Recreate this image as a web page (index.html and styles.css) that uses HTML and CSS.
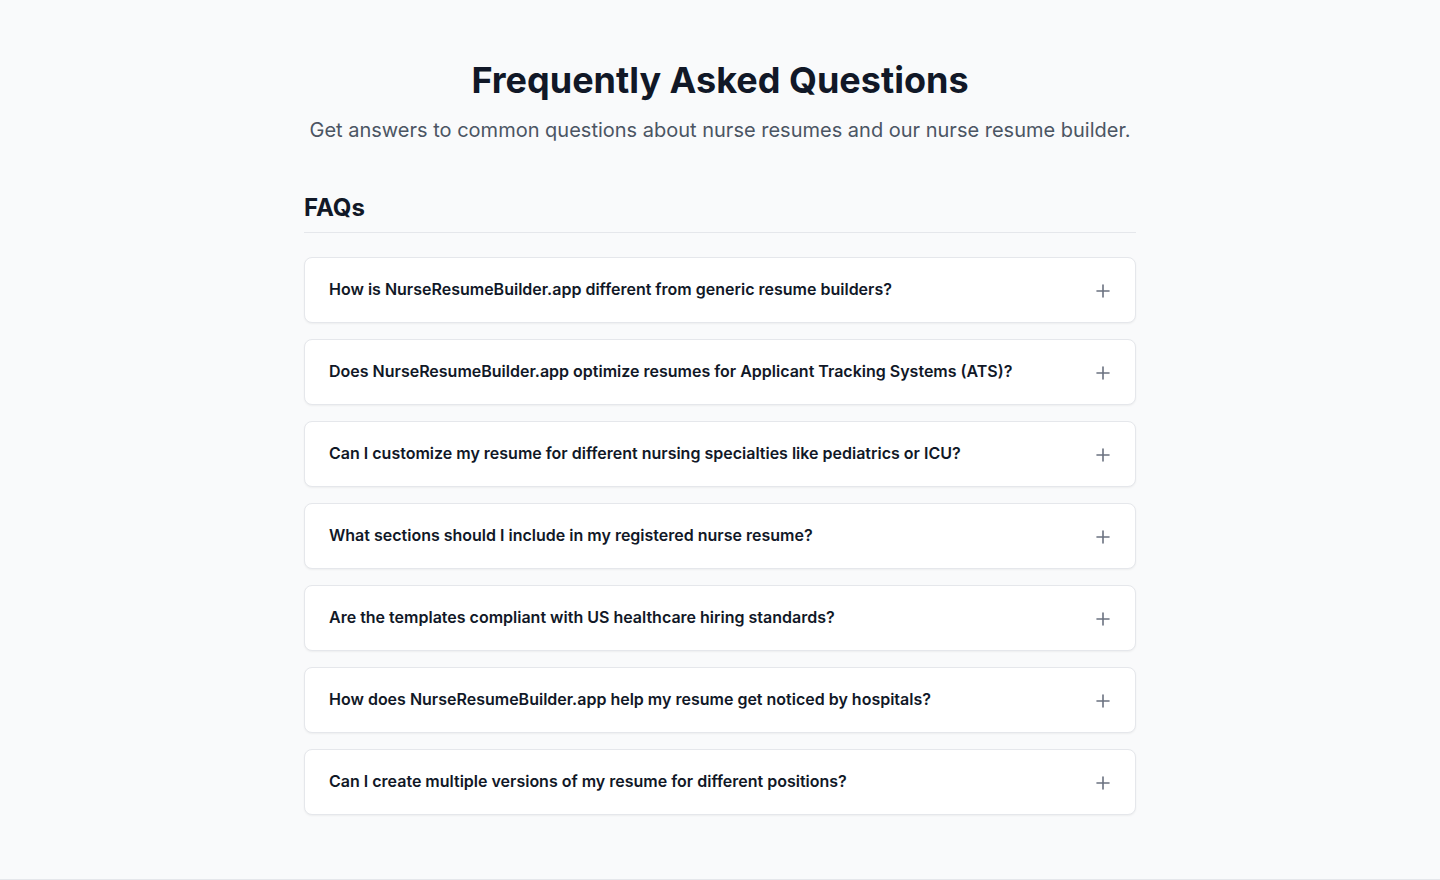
FILE: index.html
```html
<!DOCTYPE html>
<html lang="en">
<head>
    <meta charset="UTF-8">
    <meta name="viewport" content="width=device-width, initial-scale=1.0">
    <title>FAQ - NurseResumeBuilder.app</title>
    <link rel="stylesheet" href="styles.css">
</head>
<body>
    <section class="faq-section">
        <div class="faq-header">
            <h2>Frequently Asked Questions</h2>
            <p>Get answers to common questions about nurse resumes and our nurse resume builder.</p>
        </div>

        <div class="faq-list">
            <h3>FAQs</h3>

            <div class="faq-item">
                <button class="faq-question" type="button">
                    <span>How is NurseResumeBuilder.app different from generic resume builders?</span>
                    <svg class="faq-icon" viewBox="0 0 16 16" width="16" height="16"><path d="M8 2v12M2 8h12"/></svg>
                </button>
            </div>
            <div class="faq-item">
                <button class="faq-question" type="button">
                    <span>Does NurseResumeBuilder.app optimize resumes for Applicant Tracking Systems (ATS)?</span>
                    <svg class="faq-icon" viewBox="0 0 16 16" width="16" height="16"><path d="M8 2v12M2 8h12"/></svg>
                </button>
            </div>
            <div class="faq-item">
                <button class="faq-question" type="button">
                    <span>Can I customize my resume for different nursing specialties like pediatrics or ICU?</span>
                    <svg class="faq-icon" viewBox="0 0 16 16" width="16" height="16"><path d="M8 2v12M2 8h12"/></svg>
                </button>
            </div>
            <div class="faq-item">
                <button class="faq-question" type="button">
                    <span>What sections should I include in my registered nurse resume?</span>
                    <svg class="faq-icon" viewBox="0 0 16 16" width="16" height="16"><path d="M8 2v12M2 8h12"/></svg>
                </button>
            </div>
            <div class="faq-item">
                <button class="faq-question" type="button">
                    <span>Are the templates compliant with US healthcare hiring standards?</span>
                    <svg class="faq-icon" viewBox="0 0 16 16" width="16" height="16"><path d="M8 2v12M2 8h12"/></svg>
                </button>
            </div>
            <div class="faq-item">
                <button class="faq-question" type="button">
                    <span>How does NurseResumeBuilder.app help my resume get noticed by hospitals?</span>
                    <svg class="faq-icon" viewBox="0 0 16 16" width="16" height="16"><path d="M8 2v12M2 8h12"/></svg>
                </button>
            </div>
            <div class="faq-item">
                <button class="faq-question" type="button">
                    <span>Can I create multiple versions of my resume for different positions?</span>
                    <svg class="faq-icon" viewBox="0 0 16 16" width="16" height="16"><path d="M8 2v12M2 8h12"/></svg>
                </button>
            </div>
        </div>
    </section>
    <footer class="page-footer"></footer>
</body>
</html>
```

FILE: styles.css
```css
body {
    font-family: Inter, 'Noto Sans', sans-serif;
    background-color: #f9fafb;
    color: #111827;
    margin: 0;
    padding: 0;
}

.faq-section {
    padding: 60px 16px 64px;
}

.faq-header {
    text-align: center;
    max-width: 896px;
    margin: 0 auto 48px;
}

.faq-header h2 {
    font-size: 36px;
    line-height: 40px;
    font-weight: 700;
    margin: 0 0 16px;
    color: #111827;
}

.faq-header p {
    font-size: 20px;
    line-height: 28px;
    color: #4b5563;
    margin: 0;
}

.faq-list {
    max-width: 832px;
    margin: 0 auto;
    display: flex;
    flex-direction: column;
    gap: 16px;
}

.faq-list h3 {
    font-size: 24px;
    line-height: 32px;
    font-weight: 700;
    margin: 0 0 8px;
    padding-bottom: 8px;
    border-bottom: 1px solid #e5e7eb;
}

.faq-item {
    background-color: #ffffff;
    border: 1px solid #e5e7eb;
    border-radius: 8px;
    box-shadow: 0 1px 2px rgba(0, 0, 0, 0.05);
}

.faq-question {
    width: 100%;
    display: flex;
    align-items: center;
    justify-content: space-between;
    padding: 19px 24px 21px;
    background: none;
    border: none;
    font-family: inherit;
    font-size: 16px;
    line-height: 24px;
    font-weight: 600;
    color: #111827;
    text-align: left;
    cursor: pointer;
}

.faq-icon {
    flex-shrink: 0;
    fill: none;
    stroke: #6b7280;
    stroke-width: 1.6;
    stroke-linecap: round;
    margin-top: 3px;
}

.page-footer {
    border-top: 1px solid #e5e7eb;
    height: 40px;
}
```
